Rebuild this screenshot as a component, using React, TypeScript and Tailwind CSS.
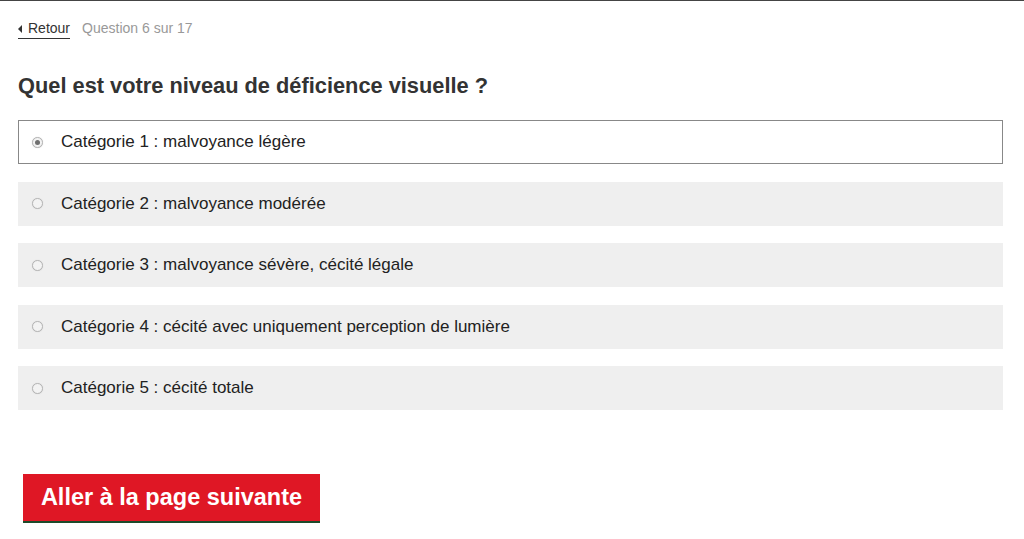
const options = [
  'Catégorie 1 : malvoyance légère',
  'Catégorie 2 : malvoyance modérée',
  'Catégorie 3 : malvoyance sévère, cécité légale',
  'Catégorie 4 : cécité avec uniquement perception de lumière',
  'Catégorie 5 : cécité totale',
];

const Radio = ({ checked }: { checked: boolean }) => (
  <span className="flex h-[11px] w-[11px] items-center justify-center rounded-full border border-[#b5b5b5] bg-[#f3f3f3] shadow-[0_0_1px_#ccc]">
    {checked && <span className="h-[5px] w-[5px] rounded-full bg-[#6f6f6f]" />}
  </span>
);

export default function App() {
  const selected = 0;
  return (
    <div className="min-h-[539px] border-t border-[#444] bg-white font-['Liberation_Sans',Arial,sans-serif]">
      <div className="pl-[18px] pr-[21px]">
        <div className="flex items-center gap-3 pt-[17px] text-[14px]">
          <a className="flex items-center gap-[6px] border-b border-[#333] pb-[1px] leading-[17px] text-[#333]">
            <svg width="4" height="8" viewBox="0 0 4 8">
              <path d="M4 0L0 4L4 8Z" fill="#333" />
            </svg>
            Retour
          </a>
          <span className="pb-[2px] text-[#999]">Question 6 sur 17</span>
        </div>
        <h1 className="mt-[32px] text-[21.8px] font-bold leading-[26px] text-[#333]">
          Quel est votre niveau de déficience visuelle ?
        </h1>
        <div className="mt-[21px] flex flex-col gap-[17.5px]">
          {options.map((label, i) => (
            <label
              key={label}
              className={`flex h-[44px] items-center gap-[18px] text-[17px] text-[#222] ${
                i === selected ? 'border border-[#888] bg-white pl-[13px]' : 'bg-[#efefef] pl-[14px]'
              }`}
            >
              <Radio checked={i === selected} />
              <span>{label}</span>
            </label>
          ))}
        </div>
        <button className="ml-[5px] mt-[64px] h-[49px] w-[297px] border-b-2 border-[#1d4a2a] bg-[#df1725] text-[23.5px] font-bold text-white">
          Aller à la page suivante
        </button>
      </div>
    </div>
  );
}
